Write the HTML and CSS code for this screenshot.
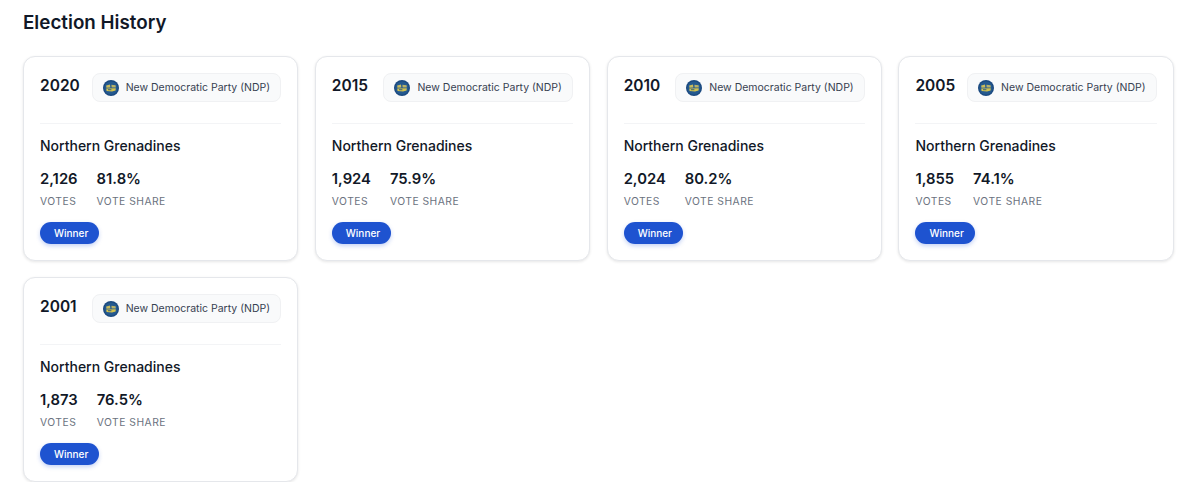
FILE: index.html
```html
<!doctype html>
<html lang="en">
	<head>
		<meta charset="UTF-8">
		<title>Election History</title>
		<link rel="stylesheet" href="styles.css">
	</head>
	<body>
		<svg class="defs">
			<symbol id="ndp" viewBox="0 0 16 16">
				<circle cx="8" cy="8" r="8" fill="#1b4a80"/>
				<circle cx="8" cy="8" r="6.6" fill="#24598f"/>
				<path d="M3.2 5.6 L7 4.6 L7.4 7.4 L3.4 7.8Z" fill="#c9bb5c"/>
				<path d="M8.4 4.8 L12.6 5.2 L12.8 7.6 L8.6 7.4Z" fill="#b9b266"/>
				<path d="M3.2 8.6 L12.8 8.2 L12.6 10.6 L9 11.6 L3.6 11Z" fill="#d3c24e"/>
				<rect x="5" y="9.2" width="3.4" height="1" fill="#3c6478"/>
			</symbol>
		</svg>

		<h2 class="titulo">Election History</h2>
		<div class="grade">

			<div class="card">
				<div class="topo">
					<div class="ano">2020</div>
					<div class="partido">
						<svg class="logo"><use href="#ndp"/></svg>
						<span>New Democratic Party (NDP)</span>
					</div>
				</div>
				<div class="distrito">Northern Grenadines</div>
				<div class="numeros">
					<div><div class="valor">2,126</div><div class="rotulo">VOTES</div></div>
					<div><div class="valor">81.8%</div><div class="rotulo">VOTE SHARE</div></div>
				</div>
				<span class="winner">Winner</span>
			</div>

			<div class="card">
				<div class="topo">
					<div class="ano">2015</div>
					<div class="partido">
						<svg class="logo"><use href="#ndp"/></svg>
						<span>New Democratic Party (NDP)</span>
					</div>
				</div>
				<div class="distrito">Northern Grenadines</div>
				<div class="numeros">
					<div><div class="valor">1,924</div><div class="rotulo">VOTES</div></div>
					<div><div class="valor">75.9%</div><div class="rotulo">VOTE SHARE</div></div>
				</div>
				<span class="winner">Winner</span>
			</div>

			<div class="card">
				<div class="topo">
					<div class="ano">2010</div>
					<div class="partido">
						<svg class="logo"><use href="#ndp"/></svg>
						<span>New Democratic Party (NDP)</span>
					</div>
				</div>
				<div class="distrito">Northern Grenadines</div>
				<div class="numeros">
					<div><div class="valor">2,024</div><div class="rotulo">VOTES</div></div>
					<div><div class="valor">80.2%</div><div class="rotulo">VOTE SHARE</div></div>
				</div>
				<span class="winner">Winner</span>
			</div>

			<div class="card">
				<div class="topo">
					<div class="ano">2005</div>
					<div class="partido">
						<svg class="logo"><use href="#ndp"/></svg>
						<span>New Democratic Party (NDP)</span>
					</div>
				</div>
				<div class="distrito">Northern Grenadines</div>
				<div class="numeros">
					<div><div class="valor">1,855</div><div class="rotulo">VOTES</div></div>
					<div><div class="valor">74.1%</div><div class="rotulo">VOTE SHARE</div></div>
				</div>
				<span class="winner">Winner</span>
			</div>

			<div class="card">
				<div class="topo">
					<div class="ano">2001</div>
					<div class="partido">
						<svg class="logo"><use href="#ndp"/></svg>
						<span>New Democratic Party (NDP)</span>
					</div>
				</div>
				<div class="distrito">Northern Grenadines</div>
				<div class="numeros">
					<div><div class="valor">1,873</div><div class="rotulo">VOTES</div></div>
					<div><div class="valor">76.5%</div><div class="rotulo">VOTE SHARE</div></div>
				</div>
				<span class="winner">Winner</span>
			</div>

		</div>
	</body>
</html>
```

FILE: styles.css
```css
body{
	margin: 0;
	padding: 0 25.5px 0 23px;
	background: #fff;
	color: #111827;
	font-family: Inter, "Liberation Sans", sans-serif;
}

.defs{
	display: none;
}

.titulo{
	margin: 0;
	padding-top: 10px;
	height: 56px;
	box-sizing: border-box;
	font-size: 18.8px;
	line-height: 25px;
	font-weight: 600;
}

.grade{
	display: grid;
	grid-template-columns: repeat(4, 1fr);
	gap: 16px 16.75px;
}

.card{
	box-sizing: border-box;
	height: 205px;
	padding: 16px;
	border: 1px solid #e5e7eb;
	border-radius: 12px;
	background: #fff;
	box-shadow: 0 1px 3px rgba(0,0,0,0.1);
}

.topo{
	display: flex;
	justify-content: space-between;
	align-items: flex-start;
	height: 50px;
	border-bottom: 1px solid #f3f4f6;
}

.ano{
	padding-top: 1px;
	font-size: 15.5px;
	line-height: 24px;
	font-weight: 600;
}

.partido{
	display: flex;
	align-items: center;
	gap: 7px;
	box-sizing: border-box;
	height: 29px;
	padding: 0 10px;
	border: 1px solid #f0f1f3;
	border-radius: 8px;
	background: #f9fafb;
	font-size: 10.5px;
	white-space: nowrap;
	color: #374151;
}

.logo{
	width: 16px;
	height: 16px;
}

.distrito{
	margin-top: 12px;
	font-size: 14px;
	line-height: 20px;
	font-weight: 500;
}

.numeros{
	display: flex;
	gap: 19px;
	margin-top: 13px;
}

.valor{
	font-size: 14.8px;
	line-height: 20px;
	font-weight: 600;
}

.rotulo{
	margin-top: 4px;
	font-size: 10.3px;
	line-height: 16px;
	letter-spacing: 0.5px;
	color: #6b7280;
}

.winner{
	display: inline-block;
	margin-top: 13px;
	padding: 0 11px 0 14px;
	height: 22px;
	line-height: 22px;
	border-radius: 11px;
	background: #1e53d0;
	box-shadow: 0 2px 4px rgba(29,78,216,0.25);
	color: #fff;
	font-size: 10px;
	font-weight: 500;
}
```
